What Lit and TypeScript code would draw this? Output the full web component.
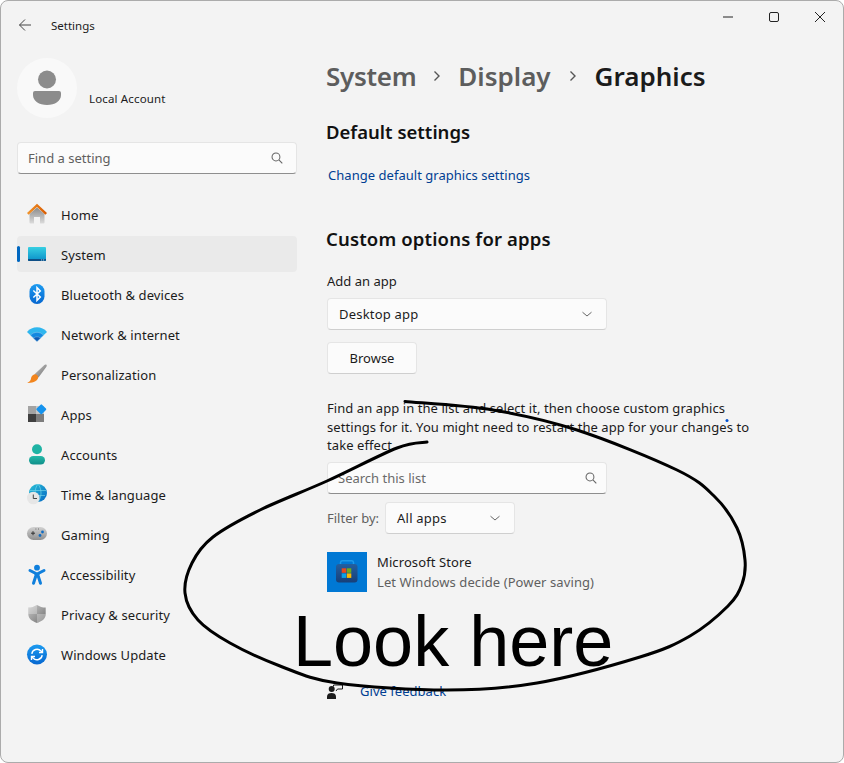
import { LitElement, css, html, svg } from "lit";
import { customElement } from "lit/decorators.js";

const chevron = html`<svg width="12" height="12" viewBox="0 0 12 12"><path d="M1.500 4.200 6 8l4.500-3.800" fill="none" stroke="#666" stroke-width="1"/></svg>`;
const lens = html`<svg width="12" height="12" viewBox="0 0 14 14"><circle cx="5.800" cy="5.800" r="4.600" fill="none" stroke="#666" stroke-width="1.200"/><path d="m9.200 9.200 4 4" stroke="#666" stroke-width="1.300"/></svg>`;
const crumbArrow = html`<svg width="10" height="12" viewBox="0 0 10 12"><path d="m2.500 1.500 4.500 4.500-4.500 4.500" fill="none" stroke="#555" stroke-width="1.400"/></svg>`;

const defs = svg`
  <defs>
    <linearGradient id="roof" x1="0" y1="0" x2="1" y2="0"><stop offset="0" stop-color="#f0932b"/><stop offset="1" stop-color="#d95b00"/></linearGradient>
    <linearGradient id="wall" x1="0" y1="0" x2="0" y2="1"><stop offset="0" stop-color="#8a8a8a"/><stop offset="1" stop-color="#dcdcdc"/></linearGradient>
    <linearGradient id="screen" x1="0" y1="0" x2="0" y2="1"><stop offset="0" stop-color="#37cfe2"/><stop offset="1" stop-color="#0a8fc9"/></linearGradient>
    <linearGradient id="blue" x1="0" y1="0" x2="0" y2="1"><stop offset="0" stop-color="#1d9bf0"/><stop offset="1" stop-color="#0667d0"/></linearGradient>
    <linearGradient id="teal" x1="0" y1="0" x2="0" y2="1"><stop offset="0" stop-color="#25b9a8"/><stop offset="1" stop-color="#0f8f8a"/></linearGradient>
    <linearGradient id="steel" x1="0" y1="0" x2="1" y2="1"><stop offset="0" stop-color="#c9c9c9"/><stop offset="1" stop-color="#6f6f6f"/></linearGradient>
    <linearGradient id="pad" x1="0" y1="0" x2="0" y2="1"><stop offset="0" stop-color="#d2d2d2"/><stop offset="1" stop-color="#8f8f8f"/></linearGradient>
    <linearGradient id="globe" x1="0" y1="0" x2="1" y2="1"><stop offset="0" stop-color="#29c1d6"/><stop offset="1" stop-color="#0668c4"/></linearGradient>
    <linearGradient id="bag" x1="0" y1="0" x2="0" y2="1"><stop offset="0" stop-color="#245f9f"/><stop offset="1" stop-color="#173f78"/></linearGradient>
  </defs>`;

const icons: Record<string, unknown> = {
  home: svg`<path d="M2.500 9 10 2.500 17.500 9v8.500a1 1 0 0 1-1 1H13v-6.500H7v6.500H3.500a1 1 0 0 1-1-1z" fill="url(#wall)"/><path d="M.8 8.800 10 .4l9.200 8.400" fill="none" stroke="url(#roof)" stroke-width="2.400"/>`,
  system: svg`<rect x="1" y="2" width="18" height="14" rx="1" fill="url(#screen)"/><path d="M1 14h18v1a1 1 0 0 1-1 1H2a1 1 0 0 1-1-1z" fill="#0e4f86"/><path d="M14 15h1.200M16 15h1.200" stroke="#9fd4ee"/>`,
  bluetooth: svg`<rect x="2.500" y="-1" width="15" height="20" rx="7.500" fill="url(#blue)"/><path d="m6.300 5.500 7 6.500-3.300 3.400V2.600L13.300 6l-7 6.500" fill="none" stroke="#fff" stroke-width="1.500"/>`,
  network: svg`<path d="M0 7C5 .8 15 .8 20 7l-10 9.500z" fill="#2fb6ee"/><path d="M3.500 10.200C7 6.400 13 6.400 16.500 10.200L10 16.500z" fill="#1288e0" stroke="#f3f3f3" stroke-width=".3"/><path d="M6.500 13.200c2-1.900 5-1.900 7 0L10 16.500z" fill="#0b5cb8" stroke="#f3f3f3" stroke-width=".3"/>`,
  brush: svg`<g transform="translate(0 -1)"><path d="M19.200.6c.7.5.7 1.300.2 2.100L11.500 13.400 7.500 10.300 17.400 1c.6-.6 1.200-.8 1.800-.4z" fill="url(#steel)"/><path d="M7.200 10.500c2-.6 4.200.9 4 3-.3 3.200-4.600 5.700-11 5.400 2.600-1.300 3.400-2.400 3.800-4.500.3-1.800 1.500-3.300 3.200-3.900z" fill="#f2851d"/></g>`,
  apps: svg`<rect x="1" y="1" width="8" height="8" fill="#a3a3a3"/><rect x="1" y="9" width="8" height="8" fill="#3f3f3f"/><rect x="9" y="9" width="8" height="8" fill="#7d7d7d"/><rect x="9" y="1" width="8" height="8" fill="#c8c8c8"/><rect x="10.500" y="0.500" width="7.600" height="7.600" rx="1" transform="rotate(45 14.300 4.300)" fill="#1593ee"/>`,
  accounts: svg`<circle cx="10" cy="4.300" r="5" fill="#1fb3a4"/><rect x="2" y="11" width="16" height="8.500" rx="4.200" fill="url(#teal)"/>`,
  time: svg`<circle cx="11" cy="8" r="9" fill="url(#globe)"/><path d="M3 5.500h16M4 10.500h14M11 -1c-4 5-4 13 0 18M11 -1c4 5 4 13 0 18" stroke="#7fdcec" stroke-width=".6" fill="none"/><circle cx="6.300" cy="13" r="6.300" fill="#e6e6e6"/><path d="M6.300 9.500V13.500H10" fill="none" stroke="#444" stroke-width="1"/>`,
  gaming: svg`<rect x="0" y="2" width="20" height="13" rx="6.500" fill="url(#pad)"/><path d="M4 8.200h4M6 6.200v4" stroke="#333" stroke-width="1"/><circle cx="13" cy="10.500" r="1.400" fill="#0f6cc4"/><circle cx="15.500" cy="7" r="1.400" fill="#0f6cc4"/><path d="M8.500 4h.8M11 4h.8" stroke="#555"/>`,
  access: svg`<circle cx="10" cy="2.700" r="2.900" fill="#0f7fdc"/><path d="M3 5.500 10 9l7-3.500" fill="none" stroke="#0f7fdc" stroke-width="3" stroke-linecap="round"/><path d="M10 8v4.500" stroke="#0f7fdc" stroke-width="5"/><path d="m8.500 12-2 6.300M11.500 12l2 6.300" stroke="#0f7fdc" stroke-width="3" stroke-linecap="round"/>`,
  privacy: svg`<path d="M10 0c2.700 1.700 5.500 2.500 8.700 2.600V9c0 4.400-3.200 7-8.700 9C4.500 16 1.300 13.400 1.300 9V2.600C4.500 2.500 7.300 1.700 10 0z" fill="url(#steel)"/><path d="M10 0v9H1.300V2.600C4.500 2.500 7.300 1.700 10 0zM10 9h8.700c0 4.400-3.200 7-8.700 9z" fill="#fff" opacity=".28"/>`,
  update: svg`<circle cx="10" cy="9.500" r="10" fill="url(#blue)"/><path d="M4.800 8.800A5.300 5.300 0 0 1 14 6l1 1.100M15.200 10.200A5.300 5.300 0 0 1 6 13l-1-1.100" fill="none" stroke="#fff" stroke-width="1.400"/><path d="M15.500 4v3.500H12M4.500 15v-3.500H8" fill="none" stroke="#fff" stroke-width="1.400"/>`,
};

const nav = [
  ["Home", "home"],
  ["System", "system"],
  ["Bluetooth & devices", "bluetooth"],
  ["Network & internet", "network"],
  ["Personalization", "brush"],
  ["Apps", "apps"],
  ["Accounts", "accounts"],
  ["Time & language", "time"],
  ["Gaming", "gaming"],
  ["Accessibility", "access"],
  ["Privacy & security", "privacy"],
  ["Windows Update", "update"],
];

// the hand-drawn circle, sampled along the stroke
const inkPoints = [
  [405, 401.5], [493, 410], [577, 430], [677, 470], [715, 497], [737, 528], [745, 560], [742, 584],
  [728, 606], [690, 636], [640, 657], [537, 683], [447, 690], [337, 683], [280, 666], [230, 643],
  [198, 620], [185, 593], [192, 563], [213, 537], [260, 510], [327, 481], [397, 448], [427, 442],
];

function smoothPath(pts: number[][]) {
  let d = `M${pts[0][0]} ${pts[0][1]}`;
  for (let i = 0; i < pts.length - 1; i++) {
    const p0 = pts[Math.max(i - 1, 0)];
    const p1 = pts[i];
    const p2 = pts[i + 1];
    const p3 = pts[Math.min(i + 2, pts.length - 1)];
    const c1x = p1[0] + (p2[0] - p0[0]) / 6;
    const c1y = p1[1] + (p2[1] - p0[1]) / 6;
    const c2x = p2[0] - (p3[0] - p1[0]) / 6;
    const c2y = p2[1] - (p3[1] - p1[1]) / 6;
    d += `C${c1x} ${c1y} ${c2x} ${c2y} ${p2[0]} ${p2[1]}`;
  }
  return d;
}

@customElement("app-root")
export class AppRoot extends LitElement {
  static styles = css`
    :host {
      display: block;
      width: 844px;
      height: 763px;
      background: #fff;
      font-family: "Noto Sans", "Open Sans", sans-serif;
      font-size: 13px;
      color: #1b1b1b;
    }
    .window {
      position: relative;
      box-sizing: border-box;
      width: 844px;
      height: 763px;
      display: grid;
      grid-template-columns: 309px 1fr;
      background: #f3f3f3;
      border: 1px solid #ababab;
      border-radius: 8px;
      overflow: hidden;
    }
    svg { overflow: visible; flex: none; }
    .side {
      display: flex;
      flex-direction: column;
      padding: 0 13px 0 16px;
    }
    .titlebar {
      display: flex;
      align-items: center;
      height: 48px;
      gap: 19px;
      font-size: 11.500px;
      margin-bottom: 2px;
    }
    .back { margin-left: 1px; }
    .profile {
      display: flex;
      align-items: flex-end;
      gap: 12px;
      margin-top: 7px;
      height: 60px;
    }
    .avatar {
      width: 60px;
      height: 60px;
      border-radius: 50%;
      background: #f9f9f9;
      display: flex;
      align-items: center;
      justify-content: center;
    }
    .account {
      font-size: 11.500px;
      letter-spacing: .15px;
      line-height: 16px;
      margin-bottom: 11px;
    }
    .field {
      box-sizing: border-box;
      display: flex;
      align-items: center;
      justify-content: space-between;
      height: 32px;
      padding: 0 13px 0 10px;
      background: #fbfbfb;
      border: 1px solid #e5e5e5;
      border-bottom: 1px solid #8e8e8e;
      border-radius: 4px;
      color: #5f5f5f;
    }
    .side .field { margin-top: 24px; }
    .nav {
      display: flex;
      flex-direction: column;
      gap: 4px;
      margin-top: 22px;
      letter-spacing: .08px;
    }
    .item {
      position: relative;
      box-sizing: border-box;
      display: flex;
      align-items: center;
      gap: 14px;
      height: 36px;
      padding: 2px 0 0 10px;
      border-radius: 4px;
    }
    .item.on { background: #eaeaea; }
    .item.on::before {
      content: "";
      position: absolute;
      left: 0;
      top: 10px;
      width: 3px;
      height: 16px;
      border-radius: 2px;
      background: #0067c0;
    }
    .main {
      display: flex;
      flex-direction: column;
      align-items: flex-start;
      padding-left: 16px;
    }
    .caption {
      align-self: stretch;
      display: flex;
      justify-content: flex-end;
      gap: 34px;
      padding: 10px 17px 0 0;
      height: 46px;
      box-sizing: border-box;
    }
    .crumbs {
      display: flex;
      align-items: center;
      height: 40px;
      margin-top: 9px;
      font-size: 26px;
      font-weight: 600;
      color: #5d5d5d;
    }
    .crumbs svg { margin: 0 16px; }
    .crumbs svg.wide { margin: 0 17px; }
    .crumbs .first { letter-spacing: -.3px; }
    .crumbs .now { color: #1b1b1b; }
    h2 {
      margin: 23px 0 0;
      font-size: 18.500px;
      font-weight: 600;
      line-height: 26px;
      color: #111;
    }
    .link { color: #003e92; letter-spacing: .03px; }
    .change { margin: 20px 0 0 2px; line-height: 20px; }
    h2.custom { margin-top: 41px; letter-spacing: .15px; }
    .pad { margin-left: 1px; }
    .add { margin-top: 19px; line-height: 20px; }
    .select {
      box-sizing: border-box;
      display: flex;
      align-items: center;
      justify-content: space-between;
      height: 32px;
      padding: 0 13px 0 11px;
      background: #fbfbfb;
      border: 1px solid #e5e5e5;
      border-bottom-color: #cfcfcf;
      border-radius: 4px;
      letter-spacing: .2px;
    }
    .app { width: 280px; margin-top: 7px; }
    .browse {
      box-sizing: border-box;
      display: flex;
      align-items: center;
      justify-content: center;
      width: 90px;
      height: 32px;
      margin-top: 12px;
      background: #fbfbfb;
      border: 1px solid #e5e5e5;
      border-bottom-color: #cfcfcf;
      border-radius: 4px;
    }
    .hint {
      width: 430px;
      margin-top: 25px;
      margin-bottom: 0;
      line-height: 18.500px;
      letter-spacing: .07px;
    }
    .list { width: 280px; margin-top: 7px; padding-right: 9px; color: #6a6a6a; }
    .filter {
      display: flex;
      align-items: center;
      gap: 6px;
      margin-top: 8px;
      color: #5f5f5f;
    }
    .filter .select { width: 130px; color: #1b1b1b; }
    .store {
      display: flex;
      gap: 10px;
      margin-top: 18px;
      letter-spacing: .1px;
    }
    .tile { width: 40px; height: 40px; display: block; }
    .store .name { line-height: 20px; }
    .store .sub { line-height: 20px; color: #5f5f5f; }
    .feedback {
      display: flex;
      align-items: center;
      gap: 17px;
      margin-top: 90px;
    }
    .ink {
      position: absolute;
      left: -1px;
      top: -1px;
      pointer-events: none;
    }
    .look {
      position: absolute;
      left: 292px;
      top: 597px;
      font-family: "Liberation Sans", Arial, sans-serif;
      font-size: 72px;
      line-height: 86px;
      color: #000;
      white-space: nowrap;
    }
  `;

  render() {
    return html`
      <div class="window">
        <aside class="side">
          <div class="titlebar">
            <svg class="back" width="14" height="14" viewBox="0 0 14 14"><path d="M13 7H1.500M7 1.500 1.500 7 7 12.500" fill="none" stroke="#444" stroke-width="1"/></svg>
            <span>Settings</span>
          </div>
          <div class="profile">
            <div class="avatar">
              <svg width="30" height="36" viewBox="0 0 30 36"><circle cx="15" cy="9.500" r="9" fill="#8c8c8c"/><path d="M3 21h24a2 2 0 0 1 2 2v2c0 6-6 10-14 10S1 31 1 25v-2a2 2 0 0 1 2-2z" fill="#8c8c8c"/></svg>
            </div>
            <span class="account">Local Account</span>
          </div>
          <div class="field"><span>Find a setting</span>${lens}</div>
          <nav class="nav">
            ${nav.map(
              ([label, key]) => html`
                <div class="item ${label === "System" ? "on" : ""}">
                  <svg width="20" height="20" viewBox="0 0 20 20">${defs}${icons[key]}</svg>
                  <span>${label}</span>
                </div>
              `,
            )}
          </nav>
        </aside>
        <main class="main">
          <div class="caption">
            <svg width="12" height="12" viewBox="0 0 12 12"><path d="M1 6h10" stroke="#222"/></svg>
            <svg width="12" height="12" viewBox="0 0 12 12"><rect x="1.500" y="1.500" width="9" height="9" rx="1.500" fill="none" stroke="#222"/></svg>
            <svg width="12" height="12" viewBox="0 0 12 12"><path d="m1 1 10 10M11 1 1 11" stroke="#222"/></svg>
          </div>
          <div class="crumbs">
            <span class="first">System</span>
            ${crumbArrow}
            <span>Display</span>
            <svg class="wide" width="10" height="12" viewBox="0 0 10 12"><path d="m2.500 1.500 4.500 4.500-4.500 4.500" fill="none" stroke="#555" stroke-width="1.400"/></svg>
            <span class="now">Graphics</span>
          </div>
          <h2>Default settings</h2>
          <div class="link change">Change default graphics settings</div>
          <h2 class="custom">Custom options for apps</h2>
          <div class="pad add">Add an app</div>
          <div class="pad select app"><span>Desktop app</span>${chevron}</div>
          <div class="pad browse">Browse</div>
          <p class="pad hint">Find an app in the list and select it, then choose custom graphics settings for it. You might need to restart the app for your changes to take effect.</p>
          <div class="pad field list"><span>Search this list</span>${lens}</div>
          <div class="pad filter">
            <span>Filter by:</span>
            <div class="select"><span>All apps</span>${chevron}</div>
          </div>
          <div class="pad store">
            <svg class="tile" viewBox="0 0 40 40">
              ${defs}
              <rect width="40" height="40" fill="#0078d4"/>
              <path d="M13.500 12v-1.500a2 2 0 0 1 2-1.800h9a2 2 0 0 1 2 1.800V12" fill="none" stroke="#1e9ae8" stroke-width="1.500"/>
              <rect x="9" y="12" width="21.500" height="18.500" rx="3" fill="url(#bag)"/>
              <rect x="14.700" y="16.300" width="4.500" height="4.500" fill="#e8491d"/>
              <rect x="19.800" y="16.300" width="4.500" height="4.500" fill="#6fab1f"/>
              <rect x="14.700" y="21.400" width="4.500" height="4.500" fill="#0aa1e8"/>
              <rect x="19.800" y="21.400" width="4.500" height="4.500" fill="#fbb800"/>
            </svg>
            <div>
              <div class="name">Microsoft Store</div>
              <div class="sub">Let Windows decide (Power saving)</div>
            </div>
          </div>
          <div class="pad feedback">
            <svg width="16" height="16" viewBox="0 0 16 16">
              <circle cx="4.700" cy="6" r="3" fill="#1b1b1b"/>
              <path d="M0 16v-2.500C0 11 2 10 4.500 10S9 11 9 13.500V16z" fill="#1b1b1b"/>
              <path d="M6.500 3.500V2h9v4h-5L9 8" fill="none" stroke="#1b1b1b"/>
            </svg>
            <span class="link">Give feedback</span>
          </div>
        </main>
        <svg class="ink" width="844" height="763" viewBox="0 0 844 763">
          <path d=${smoothPath(inkPoints)} fill="none" stroke="#000" stroke-width="3" stroke-linecap="round" stroke-linejoin="round"/>
          <circle cx="727" cy="420.500" r="1.500" fill="#0050d0"/>
        </svg>
        <span class="look">Look here</span>
      </div>
    `;
  }
}
